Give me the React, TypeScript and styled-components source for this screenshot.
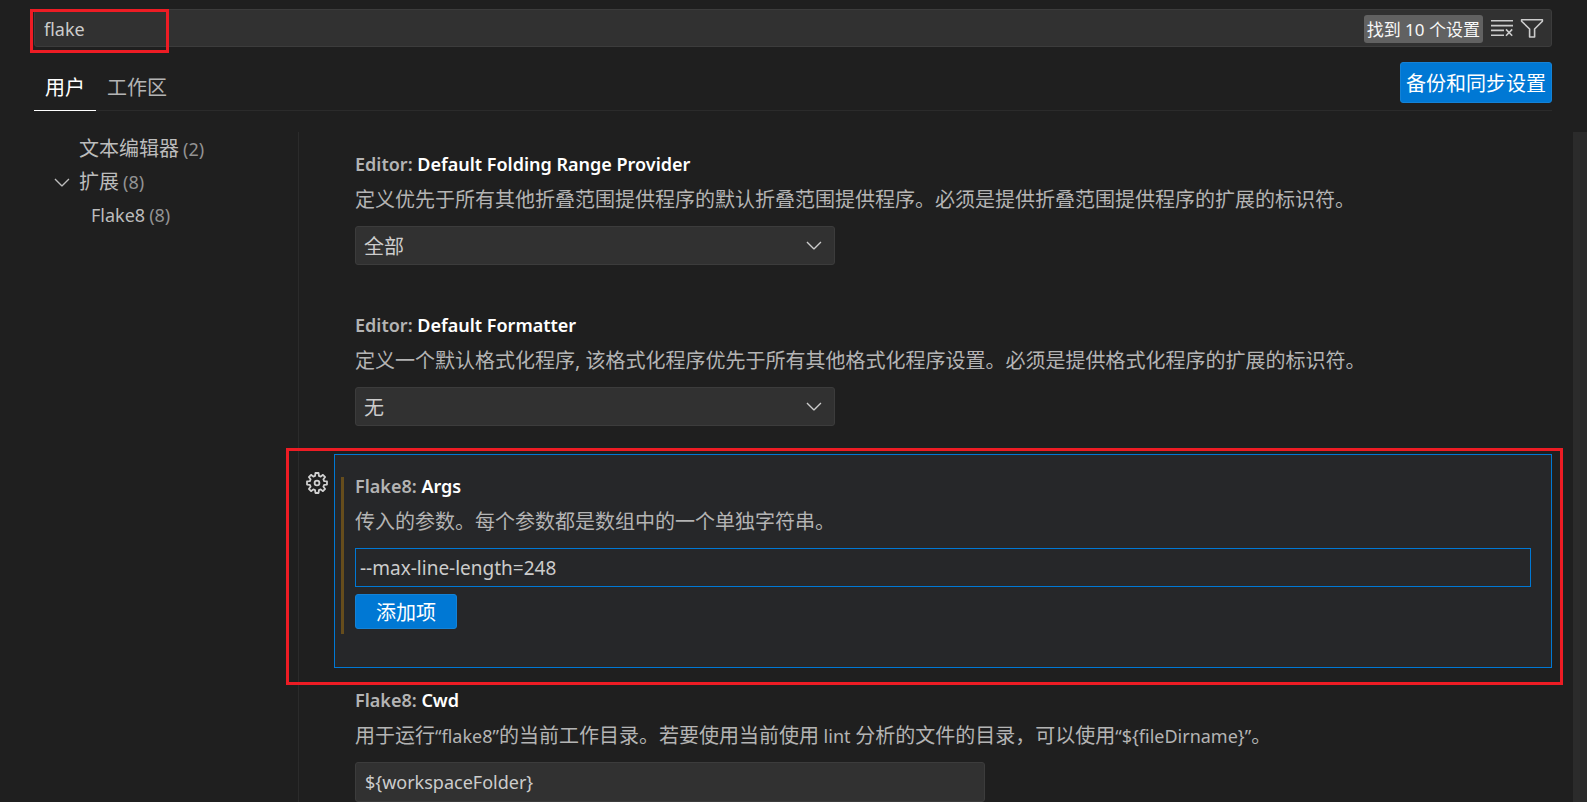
import React from "react";
import styled, { createGlobalStyle, css } from "styled-components";
import { VscChevronDown } from "react-icons/vsc";

const GlobalStyle = createGlobalStyle`
  *, *::before, *::after { box-sizing: border-box; }
  body {
    margin: 0;
    background: #1f1f1f;
    color: #cccccc;
    font-family: "Noto Sans", "Noto Sans CJK SC", sans-serif;
    font-size: 20px;
    line-height: 28px;
  }
  button, input, select { font: inherit; color: inherit; margin: 0; }
  h3, p { margin: 0; }
`;

const Editor = styled.main`
  display: flex;
  flex-direction: column;
  height: 100vh;
  overflow: hidden;
`;

const Header = styled.header`
  padding: 9px 35px 0 34px;
`;

const SearchBox = styled.div`
  position: relative;
  display: flex;
  align-items: center;
  height: 38px;
  padding-right: 7px;
  background: #313131;
  border: 1px solid #3c3c3c;
  border-radius: 3px;
`;

const SearchInput = styled.input`
  flex: 1;
  min-width: 0;
  height: 36px;
  padding: 2px 9px 0;
  background: none;
  border: 0;
  outline: 0;
  font-size: 18px;
`;

const ResultCount = styled.output`
  padding: 1px 3px 0;
  margin-top: 2px;
  margin-right: 7px;
  background: #616161;
  border-radius: 3px;
  color: #f8f8f8;
  font-size: 17px;
  line-height: 27px;
`;

const IconButton = styled.button`
  display: flex;
  padding: 0;
  background: none;
  border: 0;
  svg { width: 24px; height: 24px; }
`;

const SearchActions = styled.div`
  display: flex;
  gap: 6px;
`;

const redFrame = css`
  position: absolute;
  border: 3px solid #ed1c24;
  pointer-events: none;
`;

const SearchHighlight = styled.div`
  ${redFrame}
  top: -1px;
  left: -5px;
  width: 139px;
  height: 44px;
`;

const TabBar = styled.div`
  display: flex;
  justify-content: space-between;
  align-items: flex-end;
  height: 64px;
  border-bottom: 1px solid #2b2b2b;
`;

const Tabs = styled.div`
  display: flex;
  margin-bottom: -1px;
`;

const Tab = styled.button<{ $active?: boolean }>`
  height: 48px;
  padding: 2px 11px 0;
  background: none;
  border: 0;
  border-bottom: 1px solid ${(p) => (p.$active ? "#ffffff" : "transparent")};
  color: ${(p) => (p.$active ? "#ffffff" : "#b4b4b4")};
`;

const PrimaryButton = styled.button`
  background: #0078d4;
  border: 1px solid #1482d6;
  border-radius: 3px;
  color: #ffffff;
`;

const SyncButton = styled(PrimaryButton)`
  height: 41px;
  padding: 2px 5px 0;
  margin-bottom: 7px;
`;

const Body = styled.div`
  display: flex;
  flex: 1;
  min-height: 0;
  padding-top: 21px;
`;

const Toc = styled.nav`
  flex: none;
  width: 299px;
  padding-left: 50px;
  border-right: 1px solid #2b2b2b;
`;

const TocRow = styled.a<{ $nested?: boolean }>`
  display: flex;
  align-items: center;
  height: 33px;
  padding-left: ${(p) => (p.$nested ? 12 : 0)}px;
  color: #bcbcbc;
  text-decoration: none;
`;

const Twistie = styled.span`
  display: flex;
  width: 29px;
  svg { width: 24px; height: 24px; }
`;

const Latin = styled.span`
  font-size: 18px;
`;

const TocCount = styled.span`
  margin-left: 4px;
  color: #929292;
  font-size: 18px;
`;

const SettingList = styled.section`
  flex: 1;
  min-width: 0;
  padding: 0 21px 0 35px;
`;

const Scrollbar = styled.div`
  flex: none;
  width: 14px;
  background: #2b2b2b;
`;

const Setting = styled.article<{ $focused?: boolean }>`
  position: relative;
  padding: 17px 20px ${(p) => (p.$focused ? 38 : 27)}px;
  border: 1px solid ${(p) => (p.$focused ? "#0078d4" : "transparent")};
  background: ${(p) => (p.$focused ? "#262729" : "transparent")};
`;

const SettingHighlight = styled.div`
  ${redFrame}
  top: -7px;
  right: -12px;
  bottom: -18px;
  left: -49px;
`;

const GearButton = styled(IconButton)`
  position: absolute;
  top: 16px;
  left: -30px;
`;

const ModifiedBar = styled.span`
  position: absolute;
  top: 22px;
  bottom: 33px;
  left: 6px;
  width: 3px;
  background: #664d1c;
`;

const Title = styled.h3`
  color: #b4b4b4;
  font-size: 18px;
  font-weight: 600;
  line-height: 28px;
`;

const TitleName = styled.span`
  color: #ffffff;
`;

const Description = styled.p`
  margin: 8px 0 12px;
  color: #b4b4b4;
`;

const SelectWrap = styled.div`
  position: relative;
  width: 480px;
  max-width: 100%;
  height: 39px;
  svg {
    position: absolute;
    top: 7px;
    right: 9px;
    width: 24px;
    height: 24px;
    pointer-events: none;
  }
`;

const Select = styled.select`
  appearance: none;
  width: 100%;
  height: 39px;
  padding: 2px 8px 0;
  background: #313131;
  border: 1px solid #3c3c3c;
  border-radius: 3px;
`;

const TextInput = styled.input`
  display: block;
  width: 630px;
  max-width: 100%;
  height: 40px;
  padding: 0 9px;
  background: #313131;
  border: 1px solid #3c3c3c;
  border-radius: 3px;
  font-size: 18px;
`;

const ListInput = styled(TextInput)`
  width: 100%;
  height: 39px;
  padding: 0 4px;
  background: transparent;
  border-color: #0078d4;
  border-radius: 0;
  font-size: 19px;
`;

const AddButton = styled(PrimaryButton)`
  display: block;
  height: 35px;
  padding: 2px 20px 0;
  margin-top: 7px;
`;

function ClearIcon() {
  return (
    <svg viewBox="0 0 24 24" fill="none" stroke="#cccccc" strokeWidth="1.6">
      <path d="M1 4.8h22M1 9.6h22M1 14.4h13M1 19.2h13M16 13.4l6.2 6.4M22.2 13.4L16 19.8" />
    </svg>
  );
}

function FilterIcon() {
  return (
    <svg viewBox="0 0 24 24" fill="none" stroke="#cccccc" strokeWidth="1.6" strokeLinejoin="round">
      <path d="M1.6 3.8h20.8v1.4L14.6 13v8H9.6v-8L1.6 5.2z" />
    </svg>
  );
}

const gearOutline = Array.from({ length: 8 }, (_, tooth) =>
  [[-15, 7.4], [-9, 10.1], [9, 10.1], [15, 7.4]]
    .map(([offset, radius]) => {
      const angle = ((tooth * 45 + offset) * Math.PI) / 180;
      return `${(12 + radius * Math.sin(angle)).toFixed(2)},${(12 - radius * Math.cos(angle)).toFixed(2)}`;
    })
    .join(" ")
).join(" ");

function GearIcon() {
  return (
    <svg viewBox="0 0 24 24" fill="none" stroke="#d0d0d0" strokeWidth="1.8" strokeLinejoin="round">
      <polygon points={gearOutline} />
      <circle cx="12" cy="12" r="2.4" />
    </svg>
  );
}

function SettingTitle({ id, category, name }: { id: string; category: string; name: string }) {
  return (
    <Title>
      <label htmlFor={id}>
        {category}: <TitleName>{name}</TitleName>
      </label>
    </Title>
  );
}

function SelectSetting(props: { id: string; category: string; name: string; text: string; value: string }) {
  return (
    <Setting>
      <SettingTitle id={props.id} category={props.category} name={props.name} />
      <Description>{props.text}</Description>
      <SelectWrap>
        <Select id={props.id} defaultValue={props.value}>
          <option>{props.value}</option>
        </Select>
        <VscChevronDown />
      </SelectWrap>
    </Setting>
  );
}

export default function App() {
  return (
    <>
      <GlobalStyle />
      <Editor>
        <Header>
          <SearchBox>
            <SearchInput type="text" aria-label="搜索设置" defaultValue="flake" />
            <ResultCount>找到 10 个设置</ResultCount>
            <SearchActions>
              <IconButton aria-label="清除"><ClearIcon /></IconButton>
              <IconButton aria-label="筛选"><FilterIcon /></IconButton>
            </SearchActions>
            <SearchHighlight />
          </SearchBox>
          <TabBar>
            <Tabs>
              <Tab $active>用户</Tab>
              <Tab>工作区</Tab>
            </Tabs>
            <SyncButton>备份和同步设置</SyncButton>
          </TabBar>
        </Header>
        <Body>
          <Toc>
            <TocRow href="#text-editor"><Twistie />文本编辑器<TocCount>(2)</TocCount></TocRow>
            <TocRow href="#extensions"><Twistie><VscChevronDown /></Twistie>扩展<TocCount>(8)</TocCount></TocRow>
            <TocRow href="#flake8" $nested><Twistie /><Latin>Flake8</Latin><TocCount>(8)</TocCount></TocRow>
          </Toc>
          <SettingList>
            <SelectSetting
              id="folding-provider"
              category="Editor"
              name="Default Folding Range Provider"
              text="定义优先于所有其他折叠范围提供程序的默认折叠范围提供程序。必须是提供折叠范围提供程序的扩展的标识符。"
              value="全部"
            />
            <SelectSetting
              id="formatter"
              category="Editor"
              name="Default Formatter"
              text="定义一个默认格式化程序, 该格式化程序优先于所有其他格式化程序设置。必须是提供格式化程序的扩展的标识符。"
              value="无"
            />
            <Setting $focused>
              <GearButton aria-label="更多操作"><GearIcon /></GearButton>
              <ModifiedBar />
              <SettingTitle id="flake8-args" category="Flake8" name="Args" />
              <Description>传入的参数。每个参数都是数组中的一个单独字符串。</Description>
              <ListInput id="flake8-args" defaultValue="--max-line-length=248" />
              <AddButton>添加项</AddButton>
              <SettingHighlight />
            </Setting>
            <Setting>
              <SettingTitle id="flake8-cwd" category="Flake8" name="Cwd" />
              <Description>
                用于运行<Latin>“flake8”</Latin>的当前工作目录。若要使用当前使用<Latin> lint </Latin>分析的文件的目录，可以使用<Latin>{"“${fileDirname}”"}</Latin>。
              </Description>
              <TextInput id="flake8-cwd" defaultValue={"${workspaceFolder}"} />
            </Setting>
          </SettingList>
          <Scrollbar />
        </Body>
      </Editor>
    </>
  );
}
